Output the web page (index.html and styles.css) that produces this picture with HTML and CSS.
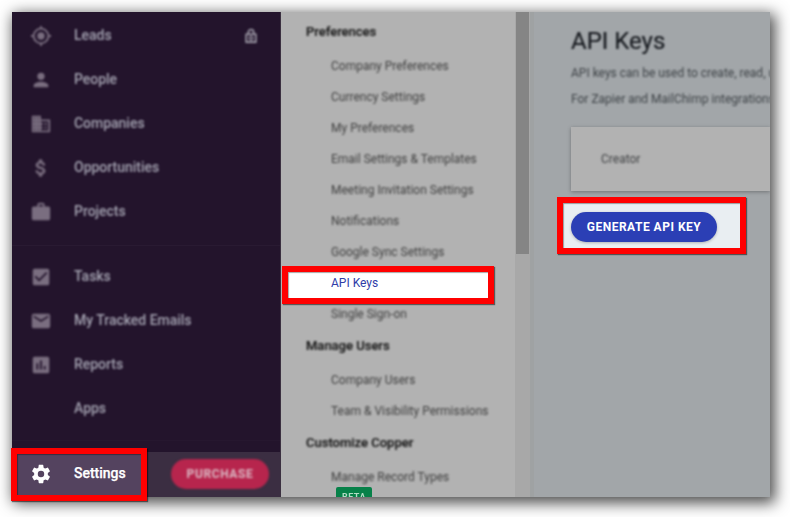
FILE: index.html
```
<!DOCTYPE html>
<html lang="en">
<head>
<meta charset="utf-8">
<title>API Keys</title>
<link rel="stylesheet" href="styles.css">
</head>
<body>
<div class="stage">
<div class="window">
  <nav class="sidebar">
    <div class="group soft">
      <div class="nav"><svg viewBox="0 0 24 24"><path d="M12 8a4 4 0 1 0 0 8 4 4 0 0 0 0-8zm8.940 3A8.990 8.990 0 0 0 13 3.060V1h-2v2.060A8.990 8.990 0 0 0 3.060 11H1v2h2.060A8.990 8.990 0 0 0 11 20.940V23h2v-2.060A8.990 8.990 0 0 0 20.940 13H23v-2h-2.060zM12 19a7 7 0 1 1 0-14 7 7 0 0 1 0 14z"/></svg><span>Leads</span>
        <svg class="lock" viewBox="0 0 16 18"><path d="M5 7V4.500a3 3 0 0 1 6 0V7M2.500 7h11v9h-11z" fill="none" stroke="currentColor" stroke-width="1.800"/><circle cx="8" cy="11.500" r="2" fill="none" stroke="currentColor" stroke-width="1.500"/></svg></div>
      <div class="nav"><svg viewBox="0 0 24 24"><path d="M12 12a4 4 0 1 0 0-8 4 4 0 0 0 0 8zm0 2c-2.670 0-8 1.340-8 4v2h16v-2c0-2.660-5.330-4-8-4z"/></svg><span>People</span></div>
      <div class="nav"><svg viewBox="0 0 24 24"><path d="M12 7V3H2v18h20V7H12zM6 19H4v-2h2v2zm0-4H4v-2h2v2zm0-4H4V9h2v2zm0-4H4V5h2v2zm4 12H8v-2h2v2zm0-4H8v-2h2v2zm0-4H8V9h2v2zm0-4H8V5h2v2zm10 12h-8v-2h2v-2h-2v-2h2v-2h-2V9h8v10zm-2-8h-2v2h2v-2zm0 4h-2v2h2v-2z"/><path d="M4 5h6v14H4z" opacity=".65"/></svg><span>Companies</span></div>
      <div class="nav"><svg class="bold" viewBox="0 0 24 24"><path d="M11.800 10.900c-2.270-.59-3-1.200-3-2.150 0-1.090 1.010-1.850 2.700-1.850 1.780 0 2.440.85 2.500 2.100h2.210c-.07-1.720-1.120-3.300-3.210-3.810V3h-3v2.160c-1.940.42-3.500 1.680-3.500 3.610 0 2.310 1.910 3.460 4.700 4.130 2.500.6 3 1.480 3 2.410 0 .69-.49 1.790-2.700 1.790-2.060 0-2.870-.92-2.980-2.100h-2.200c.12 2.190 1.760 3.420 3.680 3.830V21h3v-2.150c1.950-.37 3.500-1.500 3.500-3.550 0-2.840-2.430-3.810-4.700-4.400z"/></svg><span>Opportunities</span></div>
      <div class="nav"><svg viewBox="0 0 24 24"><path d="M20 6h-4V4a2 2 0 0 0-2-2h-4a2 2 0 0 0-2 2v2H4a2 2 0 0 0-2 2v11c0 1.110.89 2 2 2h16a2 2 0 0 0 2-2V8a2 2 0 0 0-2-2zm-6 0h-4V4h4v2z"/></svg><span>Projects</span></div>
    </div>
    <hr class="rule">
    <div class="group soft tools">
      <div class="nav"><svg viewBox="0 0 24 24"><path d="M19 3H5a2 2 0 0 0-2 2v14a2 2 0 0 0 2 2h14a2 2 0 0 0 2-2V5a2 2 0 0 0-2-2zm-9 14-5-5 1.410-1.410L10 14.170l7.590-7.590L19 8l-9 9z"/></svg><span>Tasks</span></div>
      <div class="nav"><svg viewBox="0 0 24 24"><path d="M20 4H4a2 2 0 0 0-2 2v12c0 1.100.9 2 2 2h16a2 2 0 0 0 2-2V6a2 2 0 0 0-2-2zm0 4-8 5-8-5V6l8 5 8-5v2z"/></svg><span>My Tracked Emails</span></div>
      <div class="nav"><svg viewBox="0 0 24 24"><path d="M19 3H5a2 2 0 0 0-2 2v14a2 2 0 0 0 2 2h14a2 2 0 0 0 2-2V5a2 2 0 0 0-2-2zM9 17H7v-7h2v7zm4 0h-2V7h2v10zm4 0h-2v-4h2v4z"/></svg><span>Reports</span></div>
      <div class="nav"><i class="blank"></i><span>Apps</span></div>
    </div>
    <hr class="rule last">
    <div class="footer">
      <div class="settings"><svg viewBox="0 0 24 24"><path d="M19.430 12.980c.04-.32.07-.64.07-.98s-.03-.66-.07-.98l2.110-1.650c.19-.15.24-.42.12-.64l-2-3.460c-.12-.22-.39-.3-.61-.22l-2.490 1c-.52-.4-1.080-.73-1.690-.98l-.38-2.650A.49.49 0 0 0 14 2h-4c-.25 0-.46.18-.49.42l-.38 2.650c-.61.25-1.170.59-1.690.98l-2.490-1c-.23-.09-.49 0-.61.22l-2 3.460c-.13.22-.07.49.12.64l2.110 1.650c-.04.32-.07.65-.07.98s.03.66.07.98l-2.110 1.650c-.19.15-.24.42-.12.64l2 3.460c.12.22.39.3.61.22l2.490-1c.52.4 1.080.73 1.690.98l.38 2.650c.03.24.24.42.49.42h4c.25 0 .46-.18.49-.42l.38-2.650c.61-.25 1.170-.59 1.690-.98l2.490 1c.23.09.49 0 .61-.22l2-3.460c.12-.22.07-.49-.12-.64l-2.110-1.650zM12 15.500a3.500 3.500 0 1 1 0-7 3.500 3.500 0 0 1 0 7z"/></svg><span>Settings</span></div>
      <button class="purchase soft">PURCHASE</button>
    </div>
  </nav>
  <aside class="menu">
    <div class="links">
      <h2>Preferences</h2>
      <a>Company Preferences</a>
      <a>Currency Settings</a>
      <a>My Preferences</a>
      <a>Email Settings &amp; Templates</a>
      <a>Meeting Invitation Settings</a>
      <a>Notifications</a>
      <a>Google Sync Settings</a>
      <a class="active">API Keys</a>
      <a>Single Sign-on</a>
      <h2>Manage Users</h2>
      <a>Company Users</a>
      <a>Team &amp; Visibility Permissions</a>
      <h2>Customize Copper</h2>
      <a>Manage Record Types</a>
      <b class="beta">BETA</b>
    </div>
    <div class="track"><div class="thumb"></div></div>
  </aside>
  <main class="content">
    <h1 class="soft">API Keys</h1>
    <p class="soft">API keys can be used to create, read, u</p>
    <p class="soft">For Zapier and MailChimp integrations</p>
    <section class="card"><span class="soft">Creator</span></section>
    <button class="generate">GENERATE API KEY</button>
  </main>
</div>
<div class="callout on-settings"></div>
<div class="callout on-link"></div>
<div class="callout on-button"></div>
</div>
</body>
</html>
```
FILE: styles.css
```
* { box-sizing: border-box; }
body { margin: 0; background: #fff; font-family: Roboto, "Liberation Sans", sans-serif; }
h1, h2, p, hr { margin: 0; }
button { border: 0; padding: 0; font-family: inherit; }
.stage { position: relative; width: 790px; height: 517px; padding: 12px; overflow: hidden; isolation: isolate; }
.window {
  display: flex; width: 758px; height: 485px;
  box-shadow: 3px 4px 14px 2px rgba(0,0,0,.7);
}
.soft { filter: blur(.85px); }

.sidebar { width: 269px; flex: none; display: flex; flex-direction: column; background: #23142c; padding-top: 1px; border-right: 1px solid #3b3040; }
.nav { height: 44px; display: flex; align-items: center; padding-left: 18px; }
.nav svg { width: 22px; height: 22px; fill: #7a6e80; margin-top: 1px; }
.nav svg.bold { stroke: #7a6e80; stroke-width: .8; }
.nav span, .settings span { margin-left: 22px; font-size: 14px; font-weight: 500; line-height: 20px; letter-spacing: -.02px; }
.nav span { color: #a5a4b2; }
.blank { width: 22px; }
.nav .lock { width: 14px; height: 16px; margin: 1px 22px 0 auto; fill: none; color: #a5a2ae; }
.rule { border: 0; height: 1px; background: #291a32; margin-top: 12px; }
.tools { margin-top: 8px; }
.rule.last { margin-top: 10px; background: #26172f; }
.footer { margin-top: auto; height: 45px; background: #3b2e42; display: flex; align-items: center; justify-content: space-between; padding: 0 11px 0 18px; }
.settings { display: flex; align-items: center; color: #fff; position: relative; z-index: 2; }
.settings svg { width: 22px; height: 22px; fill: #fff; margin-top: -1px; }
.settings span { margin-top: -3px; -webkit-text-stroke: .25px #fff; }
.purchase { width: 98px; height: 30px; margin-top: -1px; border-radius: 15px; background: #b7254d; color: #d8aebb; font-size: 12px; font-weight: 700; letter-spacing: .6px; -webkit-text-stroke: .2px #d8aebb; }

.menu { width: 253px; flex: none; display: flex; background: #b2b2b2; overflow: hidden; border-right: 4px solid #9fa2a3; }
.links { width: 234px; display: flex; flex-direction: column; align-items: flex-start; padding: 4px 0 0 25px; }
.links h2 { height: 35px; line-height: 31px; font-size: 13px; font-weight: 500; color: #151515; -webkit-text-stroke: .15px #151515; filter: blur(.8px); flex: none; }
.links a { height: 31px; line-height: 31px; margin-left: 25px; font-size: 12px; color: #404040; white-space: nowrap; filter: blur(.8px); flex: none; }
.links a.active { color: #303da8; filter: none; position: relative; z-index: 2; }
.beta { margin: -6px 0 0 30px; width: 36px; height: 20px; line-height: 20px; border-radius: 2px; background: #078149; color: #b0dcc3; font-size: 9px; text-align: center; letter-spacing: .5px; flex: none; filter: blur(.6px); }
.track { width: 15px; background: #a8a8a8; padding-left: 1px; }
.thumb { width: 13px; height: 242px; background: #858585; filter: blur(.6px); }

.content { flex: 1; min-width: 0; overflow: hidden; background: #a2a6a9; padding: 14px 0 0 37px; }
.content h1 { font-size: 24px; line-height: 30px; font-weight: 400; color: #181b20; -webkit-text-stroke: .2px #181b20; }
.content p { font-size: 12px; line-height: 26px; white-space: nowrap; color: #3e4347; }
.content h1 + p { margin-top: 4px; }
.card { height: 64px; margin-top: 15px; padding-left: 30px; display: flex; align-items: center; background: #b2b2b2; box-shadow: 0 1px 4px rgba(0,0,0,.3); font-size: 12px; color: #404244; }
.generate { display: block; position: relative; z-index: 2; width: 146px; height: 30px; margin-top: 21px; border-radius: 15px; background: #2b3fb5; color: #fff; font-size: 12px; font-weight: 700; letter-spacing: .5px; box-shadow: 0 1px 3px rgba(0,0,0,.25); }

.callout { position: absolute; z-index: 1; border: 6px solid #f00; box-shadow: 1px 1px 1px rgba(0,0,0,.5), inset 1px 1px 1px rgba(0,0,0,.35); }
.on-settings { left: 11px; top: 448px; width: 136px; height: 53px; background: #54435f; }
.on-link { left: 282px; top: 266px; width: 212px; height: 38px; background: #fff; }
.on-button { left: 557px; top: 197px; width: 189px; height: 57px; background: #e9eef2; }
```
